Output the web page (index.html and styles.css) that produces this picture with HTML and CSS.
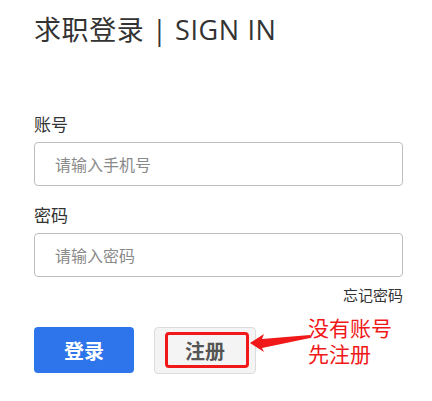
FILE: index.html
```html
<!DOCTYPE html>
<html lang="zh">
<head>
<meta charset="utf-8">
<link rel="stylesheet" href="styles.css">
</head>
<body>
<div class="page">
  <h1 class="title">求职登录 | SIGN IN</h1>
  <form class="form">
    <label class="label">账号</label>
    <input class="input" type="text" placeholder="请输入手机号">
    <label class="label label-pwd">密码</label>
    <input class="input" type="password" placeholder="请输入密码">
    <div class="forgot-row"><a class="forgot">忘记密码</a></div>
    <div class="actions">
      <button type="button" class="btn btn-login">登录</button>
      <button type="button" class="btn btn-reg">注册</button>
      <div class="mark"></div>
      <svg class="arrow" width="64" height="28" viewBox="0 0 64 28">
        <polygon points="2,16 16,7 14,12 62,8 62,11 14,21 16,25" fill="#f01818"/>
      </svg>
      <div class="note"><div class="note-line">没有账号</div><div class="note-line">先注册</div></div>
    </div>
  </form>
</div>
</body>
</html>
```
FILE: styles.css
```css
* { box-sizing: border-box; }
body {
  margin: 0;
  background: #fff;
  font-family: "Open Sans", "Noto Sans CJK SC", sans-serif;
  color: #333;
}
.page {
  padding: 10px 29px 0 34px;
}
.title {
  margin: 0;
  font-weight: 400;
  font-size: 27px;
  line-height: 40px;
  letter-spacing: 0.6px;
  color: #333;
  font-family: "Open Sans", "Noto Sans CJK SC", sans-serif;
}
.form {
  display: flex;
  flex-direction: column;
  margin-top: 62px;
}
.label {
  font-family: "Noto Sans CJK SC", sans-serif;
  font-size: 17px;
  line-height: 24px;
  color: #333;
  margin-bottom: 6px;
}
.label-pwd { margin-top: 17px; margin-bottom: 6px; }
.input {
  width: 369px;
  height: 44px;
  border: 1px solid #bdbdbd;
  border-radius: 4px;
  padding: 0 20px;
  font-family: "Noto Sans CJK SC", sans-serif;
  font-size: 16px;
  outline: none;
}
.input::placeholder { color: #8a8a8a; }
.forgot-row {
  display: flex;
  justify-content: flex-end;
  margin-top: 8px;
}
.forgot {
  font-family: "Noto Sans CJK SC", sans-serif;
  font-size: 15px;
  line-height: 20px;
  color: #333;
}
.actions {
  position: relative;
  display: flex;
  gap: 20px;
  margin-top: 22px;
}
.btn {
  height: 46px;
  font-family: "Noto Sans CJK SC", sans-serif;
  font-size: 20px;
  font-weight: 700;
  border-radius: 4px;
  cursor: pointer;
}
.btn-login {
  width: 100px;
  background: #2e74ea;
  color: #fff;
  border: none;
}
.btn-reg {
  width: 102px;
  height: 47px;
  background: #f4f4f4;
  color: #555;
  border: 1px solid #dcdcdc;
}
.mark {
  position: absolute;
  left: 131px;
  top: 5px;
  width: 84px;
  height: 36px;
  border: 3px solid #f01818;
  border-radius: 4px;
}
.arrow {
  position: absolute;
  left: 214px;
  top: 0;
}
.note {
  position: absolute;
  left: 274px;
  top: -12px;
  font-family: "Noto Sans CJK SC", sans-serif;
  font-size: 21px;
  color: #f01818;
  display: flex;
  flex-direction: column;
  gap: 1px;
}
.note-line {
  line-height: 25px;
  height: 25px;
}
```
